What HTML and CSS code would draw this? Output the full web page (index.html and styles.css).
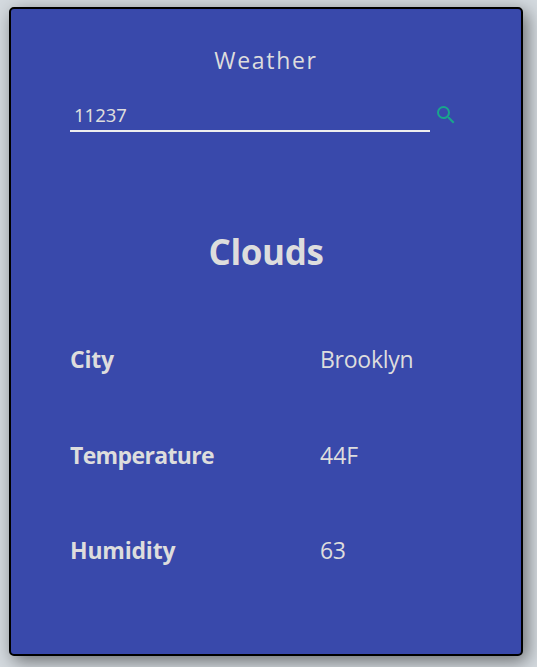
FILE: index.html
```
<!DOCTYPE html>
<html lang="en">
<head>
<meta charset="utf-8">
<title>Weather</title>
<link rel="stylesheet" href="styles.css">
</head>
<body>
<main class="card">
  <h1 class="title">Weather</h1>
  <form class="search">
    <input class="zip" type="text" value="11237" aria-label="Zip code">
    <svg class="icon" viewBox="0 0 24 24"><path d="M15.5 14h-.79l-.28-.27A6.47 6.47 0 0 0 16 9.5 6.5 6.5 0 1 0 9.5 16c1.61 0 3.09-.59 4.23-1.57l.27.28v.79l5 4.99L20.49 19l-4.99-5zm-6 0C7.01 14 5 11.99 5 9.5S7.01 5 9.5 5 14 7.01 14 9.5 11.99 14 9.5 14z"/></svg>
  </form>
  <h2 class="condition">Clouds</h2>
  <dl class="details">
    <dt><span class="city">City</span></dt><dd><span class="brooklyn">Brooklyn</span></dd>
    <dt><span class="temperature">Temperature</span></dt><dd><span class="degrees">44F</span></dd>
    <dt><span class="humidity">Humidity</span></dt><dd><span class="percent">63</span></dd>
  </dl>
</main>
</body>
</html>
```
FILE: styles.css
```
* { box-sizing: border-box; }
body { margin: 0; padding: 7px 14px 11px 9px; height: 667px; overflow: hidden; background: #d4dadf; font-family: "Open Sans", "Noto Sans", sans-serif; color: #ddd; }
.card { height: 649px; border: 2px solid #000; border-radius: 5px; background: #3949ab; padding: 35px 59px 0; box-shadow: 4px 5px 18px rgba(0,0,0,.5); }
.title { margin: 0; height: 32px; font-size: 23px; line-height: 32px; font-weight: 400; letter-spacing: 1.7px; text-align: center; }
.search { margin: 24px 0 0; display: flex; align-items: center; height: 32px; }
.zip { width: 360px; height: 32px; padding: 0 4px 2px; border: 0; border-bottom: 2px solid #eee; background: none; color: #ddd; font: 18.5px "Noto Sans", sans-serif; outline: 0; }
.icon { width: 24px; height: 24px; margin: -2px 0 0 4px; fill: #19a68c; flex: none; }
.condition { margin: 94px 0 0; height: 52px; line-height: 52px; font-size: 35px; font-weight: 700; letter-spacing: -.4px; text-align: center; }
.details { margin: 34px 0 0; display: grid; grid-template-columns: 250px 1fr; grid-auto-rows: 95.5px; font-size: 23px; line-height: 95.5px; }
dt { font-weight: 700; }
dd { margin: 0; }
.city, .humidity { letter-spacing: -.2px; }
.temperature { letter-spacing: -.65px; }
.brooklyn { letter-spacing: -.25px; }
.percent { letter-spacing: -.5px; }
```
